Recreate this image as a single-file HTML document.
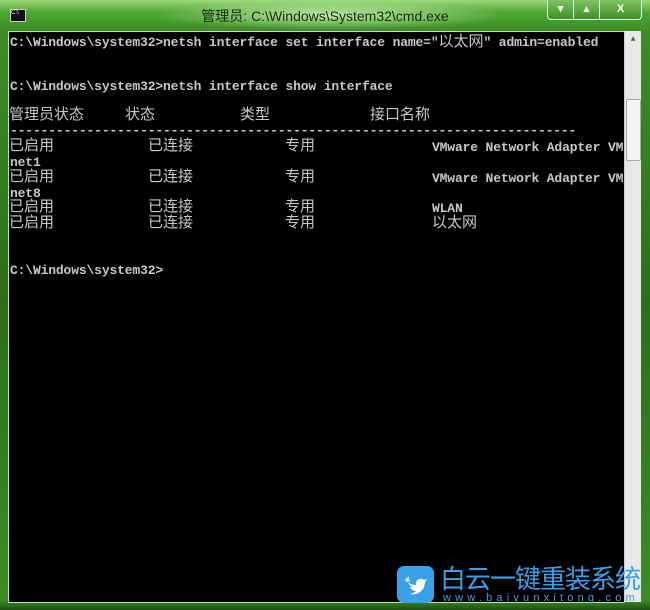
<!DOCTYPE html>
<html style="width:650px;height:610px;overflow:hidden"><head><meta charset="utf-8"><style>
*{margin:0;padding:0}
body{width:650px;height:610px;overflow:hidden;background:#2f7a1e;position:relative;font-family:"Liberation Mono","Noto Sans CJK SC",monospace}
.frame{position:absolute;inset:0;background:linear-gradient(180deg,#9fd97e 0,#4fa832 12px,#3c8e25 30px,#2c6f1a 300px,#3c8d24 600px,#1d4f12 610px)}
.glow{position:absolute;left:150px;top:0;width:360px;height:30px;background:radial-gradient(ellipse at center,rgba(230,255,210,.75),rgba(200,240,170,0) 70%)}
.title{position:absolute;left:0;width:650px;top:6px;text-align:center;font:14px "Liberation Sans","Noto Sans CJK SC",sans-serif;color:#1a2a10}
.ico{position:absolute;left:10px;top:9px;width:14px;height:11px;background:#111;border:1px solid #ccc;font:6px sans-serif;color:#fff;overflow:hidden}
.btns{position:absolute;left:547px;top:0;width:93px;height:19px;border:1px solid #dfe;border-top:none;border-radius:0 0 4px 4px;background:linear-gradient(#7fc460,#3e8d26)}
.btns div{position:absolute;top:0;height:19px;border-right:1px solid #cfe;color:#fff;font:bold 11px "Liberation Sans",sans-serif;text-align:center;line-height:18px}
.con{position:absolute;left:8px;top:31px;width:616px;height:570px;background:#000;border:1px solid #bfe0b0;border-right:none;overflow:hidden}
.sb{position:absolute;left:624px;top:31px;width:16px;height:571px;background:#e8e8e8;border-left:1px solid #ccc}
.thumb{position:absolute;left:1px;top:68px;width:13px;height:60px;background:#f4f4f4;border:1px solid #aaa;border-radius:2px}
.t{position:absolute;color:#c8c8c8;font-size:13px;font-weight:bold;white-space:pre;letter-spacing:-0.15px;line-height:15px}
.c{font-weight:normal;letter-spacing:0;font-size:15px;font-family:"Noto Sans CJK SC",sans-serif}
.logo{position:absolute;left:397px;top:566px;width:37px;height:37px;background:#3aa0e8;border-radius:7px}
.brand{position:absolute;left:440px;top:563px;color:#3aa0e8;font:26px "Noto Sans CJK SC",sans-serif;letter-spacing:-1px;line-height:30px;white-space:nowrap}
.url{position:absolute;left:443px;top:592px;color:#3aa0e8;font:11px "Liberation Sans",sans-serif;letter-spacing:4.2px;white-space:nowrap}
</style></head><body>
<div class="frame"></div><div class="glow"></div>
<div class="ico">C:\</div>
<div class="title">管理员: C:\Windows\System32\cmd.exe</div>
<div class="btns"><div style="left:0;width:25px">▾</div><div style="left:26px;width:25px">▴</div><div style="left:52px;width:41px;border:none">X</div></div>
<div class="con"></div>
<div class="sb"><div style="font-size:8px;color:#555;text-align:center;margin-top:4px">▲</div><div class="thumb"></div></div>
<div class="t" style="left:10px;top:33px">C:\Windows\system32&gt;netsh interface set interface name="<span class="c">以太网</span>" admin=enabled</div>
<div class="t" style="left:10px;top:79px">C:\Windows\system32&gt;netsh interface show interface</div>
<div class="t c" style="left:9px;top:106px">管理员状态</div>
<div class="t c" style="left:125px;top:106px">状态</div>
<div class="t c" style="left:240px;top:106px">类型</div>
<div class="t c" style="left:370px;top:106px">接口名称</div>
<div class="t" style="left:10px;top:123px">--------------------------------------------------------------------------</div>
<div class="t c" style="left:9px;top:137px">已启用</div><div class="t c" style="left:148px;top:137px">已连接</div><div class="t c" style="left:285px;top:137px">专用</div><div class="t" style="left:432px;top:140px">VMware Network Adapter VM</div>
<div class="t" style="left:10px;top:155px">net1</div>
<div class="t c" style="left:9px;top:168px">已启用</div><div class="t c" style="left:148px;top:168px">已连接</div><div class="t c" style="left:285px;top:168px">专用</div><div class="t" style="left:432px;top:171px">VMware Network Adapter VM</div>
<div class="t" style="left:10px;top:186px">net8</div>
<div class="t c" style="left:9px;top:198px">已启用</div><div class="t c" style="left:148px;top:198px">已连接</div><div class="t c" style="left:285px;top:198px">专用</div><div class="t" style="left:432px;top:201px">WLAN</div>
<div class="t c" style="left:9px;top:214px">已启用</div><div class="t c" style="left:148px;top:214px">已连接</div><div class="t c" style="left:285px;top:214px">专用</div><div class="t c" style="left:432px;top:214px">以太网</div>
<div class="t" style="left:10px;top:263px">C:\Windows\system32&gt;</div>
<div class="logo"><svg width="37" height="37" viewBox="0 0 37 37"><path d="M8 14c3 3 7 5 11 5-1-5 4-8 8-5l3-1-2 3c0 8-7 14-16 12 3 0 5-1 7-3-3 0-5-2-6-4h3c-3-1-5-3-5-6l3 1c-2-1-3-4-2-6z" fill="#fff"/></svg></div>
<div class="brand">白云一键重装系统</div>
<div class="url">www.baiyunxitong.com</div>
</body></html>
